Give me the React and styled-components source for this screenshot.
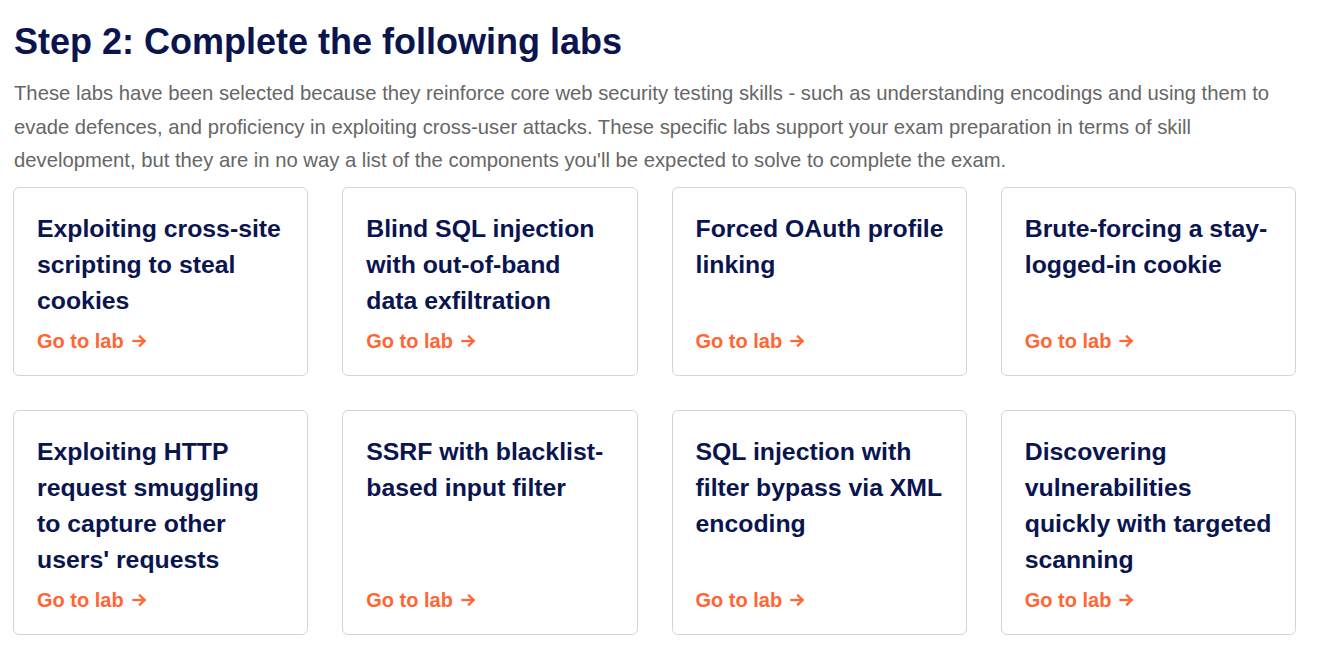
import React from "react";
import styled, { createGlobalStyle } from "styled-components";

const Global = createGlobalStyle`
  html, body { margin: 0; padding: 0; background: #fff; }
  body { font-family: "Liberation Sans", Arial, sans-serif; }
`;

const Page = styled.main`
  padding: 18px 28px 20px 13px;
`;

const Heading = styled.h2`
  margin: 0 0 0 1px;
  font-size: 36px;
  line-height: 48px;
  font-weight: 700;
  color: #0a1550;
`;

const Intro = styled.p`
  margin: 11px 0 9px 1px;
  font-size: 20.25px;
  line-height: 33.5px;
  color: #666666;
`;

const Grid = styled.div`
  display: grid;
  grid-template-columns: repeat(4, 1fr);
  column-gap: 34px;
  row-gap: 34px;
`;

const Card = styled.a`
  display: flex;
  flex-direction: column;
  justify-content: space-between;
  border: 1px solid #d2d4d6;
  border-radius: 6px;
  padding: 23px 20px 20px 23px;
  text-decoration: none;
`;

const Title = styled.h3`
  margin: 0 0 8px 0;
  font-size: 24.8px;
  line-height: 36px;
  font-weight: 700;
  color: #0a1550;
`;

const GoLink = styled.span`
  display: inline-flex;
  align-items: center;
  gap: 8px;
  font-size: 20px;
  line-height: 28px;
  font-weight: 700;
  color: #ff6633;
`;

const Arrow = () => (
  <svg width="15" height="14" viewBox="0 0 15 14" fill="none" stroke="#ff6633" strokeWidth="2.3" strokeLinecap="square">
    <path d="M1.5 7 H12.5" />
    <path d="M8 2.5 L12.5 7 L8 11.5" />
  </svg>
);

const labs = [
  "Exploiting cross-site scripting to steal cookies",
  "Blind SQL injection with out-of-band data exfiltration",
  "Forced OAuth profile linking",
  "Brute-forcing a stay-logged-in cookie",
  "Exploiting HTTP request smuggling to capture other users' requests",
  "SSRF with blacklist-based input filter",
  "SQL injection with filter bypass via XML encoding",
  "Discovering vulnerabilities quickly with targeted scanning",
];

export default function App() {
  return (
    <>
      <Global />
      <Page>
        <Heading>Step 2: Complete the following labs</Heading>
        <Intro>
          These labs have been selected because they reinforce core web security testing skills - such as understanding encodings and using them to evade defences, and proficiency in exploiting cross-user attacks. These specific labs support your exam preparation in terms of skill development, but they are in no way a list of the components you'll be expected to solve to complete the exam.
        </Intro>
        <Grid>
          {labs.map((t) => (
            <Card key={t} href="#">
              <Title>{t}</Title>
              <div>
                <GoLink>
                  Go to lab <Arrow />
                </GoLink>
              </div>
            </Card>
          ))}
        </Grid>
      </Page>
    </>
  );
}
